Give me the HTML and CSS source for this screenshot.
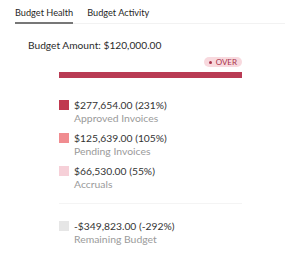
FILE: index.html
```html
<!DOCTYPE html>
<html lang="en">
  <head>
    <meta charset="utf-8" />
    <title>Budget Health</title>
    <link rel="stylesheet" href="styles.css">
  </head>
  <body>
    <ul class="tabs">
      <li class="tab active">Budget Health</li>
      <li class="tab">Budget Activity</li>
    </ul>
    <div class="amount">Budget Amount: $120,000.00</div>
    <div class="chart">
      <div class="badge-row">
        <span class="badge"><span class="dot"></span>OVER</span>
      </div>
      <div class="bar"></div>
      <ul class="legend">
        <li class="item">
          <span class="swatch approved"></span>
          <div>
            <div class="value">$277,654.00 (231%)</div>
            <div class="label">Approved Invoices</div>
          </div>
        </li>
        <li class="item">
          <span class="swatch pending"></span>
          <div>
            <div class="value">$125,639.00 (105%)</div>
            <div class="label">Pending Invoices</div>
          </div>
        </li>
        <li class="item">
          <span class="swatch accruals"></span>
          <div>
            <div class="value">$66,530.00 (55%)</div>
            <div class="label">Accruals</div>
          </div>
        </li>
      </ul>
      <ul class="legend remaining">
        <li class="item">
          <span class="swatch rest"></span>
          <div>
            <div class="value">-$349,823.00 (-292%)</div>
            <div class="label">Remaining Budget</div>
          </div>
        </li>
      </ul>
    </div>
  </body>
</html>
```
FILE: styles.css
```css
body, html {
  margin: 0;
  padding: 0;
  background-color: #fff;
  font-family: "Lato", "Helvetica", "Arial", sans-serif;
  color: #333;
}
.tabs {
  list-style: none;
  margin: 0 15px;
  padding: 6px 0 0 0;
  display: flex;
  gap: 14px;
  border-bottom: 1px solid #f2f2f2;
}
.tab {
  font-size: 9.2px;
  line-height: 13px;
  padding-bottom: 3px;
  border-bottom: 2px solid transparent;
  margin-bottom: -1px;
  color: #1f1f1f;
}
.tab.active {
  border-bottom-color: #777;
}
.amount {
  margin: 14px 0 0 28px;
  font-size: 10.2px;
  line-height: 14px;
  color: #2b2b2b;
}
.chart {
  width: 183px;
  margin: 5px 0 0 59px;
}
.badge-row {
  display: flex;
  justify-content: flex-end;
}
.badge {
  display: flex;
  align-items: center;
  gap: 4px;
  background-color: #f8d9de;
  color: #a8334b;
  font-size: 8px;
  line-height: 10px;
  padding: 0 5px;
  border-radius: 6px;
}
.dot {
  width: 3px;
  height: 3px;
  border-radius: 50%;
  background-color: #a8334b;
}
.bar {
  height: 6px;
  margin-top: 5px;
  background-color: #b93b54;
}
.legend {
  list-style: none;
  margin: 0;
  padding: 21px 0 12px 0;
  display: flex;
  flex-direction: column;
  gap: 7px;
}
.legend.remaining {
  border-top: 1px solid #f4f4f4;
  padding-top: 16px;
}
.item {
  display: flex;
  gap: 5px;
}
.swatch {
  width: 10px;
  height: 10px;
  margin-top: 1px;
  flex-shrink: 0;
}
.swatch.approved { background-color: #c0394f; }
.swatch.pending { background-color: #f08c90; }
.swatch.accruals { background-color: #f6d0d8; }
.swatch.rest { background-color: #e6e6e6; }
.value {
  font-size: 10.3px;
  line-height: 13px;
  color: #333;
}
.label {
  font-size: 10.4px;
  line-height: 13px;
  color: #9a9a9a;
}
```
